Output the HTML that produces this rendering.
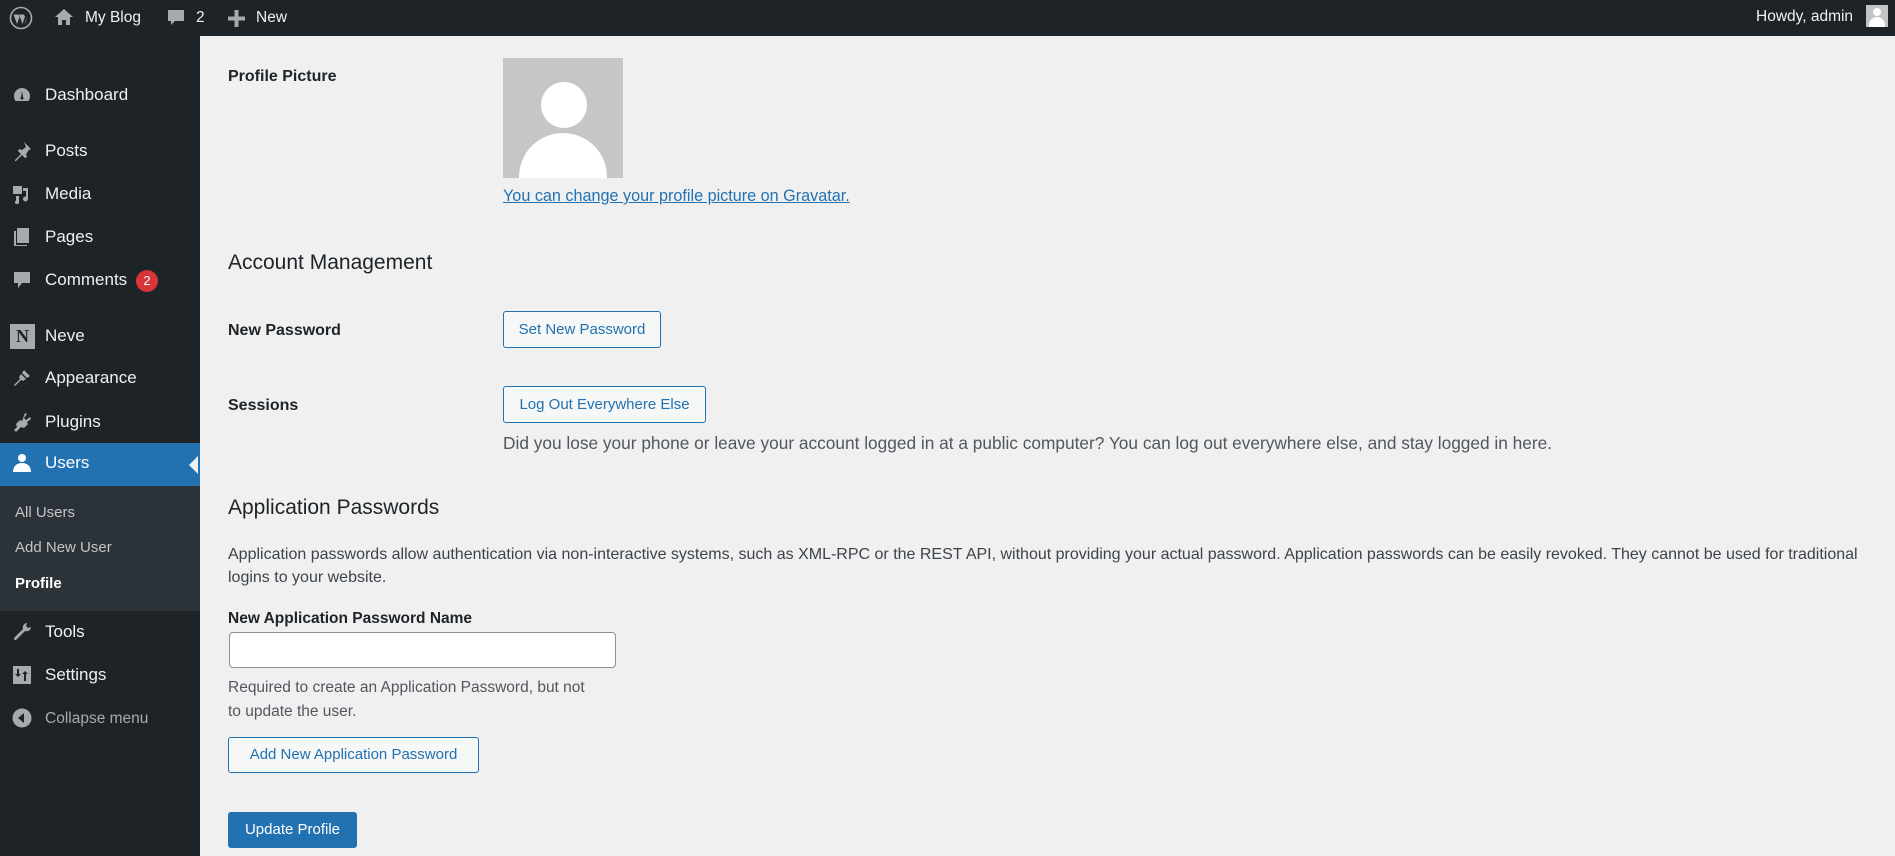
<!DOCTYPE html>
<html><head><meta charset="utf-8"><style>
*{box-sizing:border-box;margin:0;padding:0}
body{width:1895px;height:856px;overflow:hidden;background:#f0f0f1;font-family:"Liberation Sans",sans-serif;color:#1d2327;position:relative}
.a{position:absolute;white-space:nowrap}
#bar{position:absolute;left:0;top:0;width:1895px;height:36px;background:#1d2327;color:#f0f0f1;font-size:15.5px}
#side{position:absolute;left:0;top:36px;width:200px;height:820px;background:#1d2327}
.mi{position:absolute;left:45px;color:#f0f0f1;font-size:17px;line-height:20px}
.ic{position:absolute;left:11px;width:22px;height:20px;fill:#a7aaad}
.sub{position:absolute;left:15px;color:#c3c4c7;font-size:15px}
.lbl{position:absolute;left:228px;font-size:16px;font-weight:bold;color:#1d2327}
.btn{position:absolute;border:1px solid #2271b1;border-radius:3px;background:#f6f7f7;color:#2271b1;font-size:15px;text-align:center}
.p{font-size:16.2px;color:#50575e}
</style></head><body>
<div id="bar">
 <svg class="a" style="left:9px;top:6px" width="24" height="24" viewBox="0 0 24 24"><circle cx="12" cy="12" r="10.5" fill="none" stroke="#a7aaad" stroke-width="1.6"/><path d="M4.5 8.5l3.5 9.5 2.5-7-1-2.5h-1.5zM10 8.5l3.5 9.5 2.5-7.5-1.2-2h-1.3zM16.5 9.5c1.5 2.5 1.5 5-1 8.5l2-6z" fill="#a7aaad"/></svg>
 <svg class="a" style="left:54px;top:8px" width="20" height="18" viewBox="0 0 20 18"><path d="M10 1L1 9h3v8h4v-5h4v5h4V9h3z" fill="#a7aaad"/></svg>
 <div class="a" style="left:85px;top:9px">My Blog</div>
 <svg class="a" style="left:166px;top:8px" width="20" height="20" viewBox="0 0 20 20"><path d="M2 2h16v11H9l-4 4v-4H2z" fill="#a7aaad"/></svg>
 <div class="a" style="left:196px;top:9px">2</div>
 <svg class="a" style="left:228px;top:10px" width="17" height="17" viewBox="0 0 17 17"><path d="M6.5 0h4v6.5H17v4h-6.5V17h-4v-6.5H0v-4h6.5z" fill="#a7aaad"/></svg>
 <div class="a" style="left:256px;top:9px">New</div>
 <div class="a" style="left:1756px;top:8px">Howdy, admin</div>
 <div class="a" style="left:1866px;top:5px;width:22px;height:22px;background:#c3c4c7;overflow:hidden"><div style="position:absolute;left:7px;top:3px;width:8px;height:8px;border-radius:50%;background:#fff"></div><div style="position:absolute;left:3px;top:12px;width:16px;height:14px;border-radius:8px 8px 0 0;background:#fff"></div></div>
</div>
<div id="side">
 <div class="a" style="left:0;top:407px;width:200px;height:43px;background:#2271b1"></div>
 <div class="a" style="left:189px;top:420px;width:0;height:0;border:9px solid transparent;border-right-color:#f0f0f1;border-left:0"></div>
 <div class="a" style="left:0;top:450px;width:200px;height:125px;background:#2c3338"></div>
</div>
<svg class="ic" style="top:85px" viewBox="0 0 20 20"><path d="M10 3a8 8 0 0 0-8 8c0 2 .6 3.5 1.5 5h13c.9-1.5 1.5-3 1.5-5a8 8 0 0 0-8-8zm0 3l1 6a1.5 1.5 0 1 1-2 0z"/></svg><div class="mi" style="top:85px">Dashboard</div>
<svg class="ic" style="top:141px" viewBox="0 0 20 20"><path d="M12 1l7 7-2 1-3 4 1 3-2 1-3-3-6 6-1 0 0-1 6-6-3-3 1-2 3 1 4-3z"/></svg><div class="mi" style="top:141px">Posts</div>
<svg class="ic" style="top:184px" viewBox="0 0 20 20"><path d="M1 2h9v8H1zM11 4h5v11a2.5 2.5 0 1 1-2-2.5V7h-3zM4 12h3v6a2 2 0 1 1-3-1.5z"/></svg><div class="mi" style="top:184px">Media</div>
<svg class="ic" style="top:227px" viewBox="0 0 20 20"><path d="M5 1h12v15H5z M2 4h2v14h11v1H2z"/></svg><div class="mi" style="top:227px">Pages</div>
<svg class="ic" style="top:270px" viewBox="0 0 20 20"><path d="M2 2h16v11H10l-4 5v-5H2z"/></svg><div class="mi" style="top:270px">Comments</div>
<div class="a" style="left:136px;top:270px;width:22px;height:22px;border-radius:11px;background:#d63638;color:#fff;font-size:13px;text-align:center;line-height:22px">2</div>
<div class="a" style="left:10px;top:324px;width:25px;height:25px;background:#a7aaad;color:#1d2327;font:bold 18px 'Liberation Serif',serif;text-align:center;line-height:25px">N</div><div class="mi" style="top:326px">Neve</div>
<svg class="ic" style="top:368px" viewBox="0 0 20 20"><path d="M12 2l6 6-3 2-5-5zM9 6l5 5-3 2-2-1-6 6-1-1 6-6-1-2z"/></svg><div class="mi" style="top:368px">Appearance</div>
<svg class="ic" style="top:412px" viewBox="0 0 20 20"><path d="M13 1l2 1-3 4 2 2 4-3 1 2-4 3 1 2-4 4-3-1-5 5-2-2 3-3-1-3 4-4 2 1z"/></svg><div class="mi" style="top:412px">Plugins</div>
<svg class="ic" style="top:453px;fill:#fff" viewBox="0 0 20 20"><circle cx="10" cy="5" r="4"/><path d="M1 19c0-6 4-9 9-9s9 3 9 9z"/></svg><div class="mi" style="top:453px;color:#fff">Users</div>
<div class="sub" style="top:504px">All Users</div>
<div class="sub" style="top:539px">Add New User</div>
<div class="sub" style="top:575px;color:#fff;font-weight:bold">Profile</div>
<svg class="ic" style="top:622px" viewBox="0 0 20 20"><path d="M15 1a4.5 4.5 0 0 0-4 6l-9 9a1.6 1.6 0 0 0 2 2l9-9a4.5 4.5 0 0 0 6-4l-3 1-2-2 1-3z"/></svg><div class="mi" style="top:622px">Tools</div>
<svg class="ic" style="top:665px" viewBox="0 0 20 20"><path d="M1 1h18v18H1zM5 4v5H3l3 3 3-3H7V4zm7 12h2V9h2l-3-3-3 3h2z"/></svg><div class="mi" style="top:665px">Settings</div>
<svg class="ic" style="top:708px" viewBox="0 0 20 20"><circle cx="10" cy="10" r="9.5"/><path d="M12 5v10l-6-5z" fill="#1d2327"/></svg><div class="mi" style="top:709px;color:#a7aaad;font-size:15.5px">Collapse menu</div>

<div class="lbl" style="top:68px">Profile Picture</div>
<div class="a" style="left:503px;top:58px;width:120px;height:120px;background:#c6c6c6;overflow:hidden"><div style="position:absolute;left:38px;top:24px;width:46px;height:46px;border-radius:50%;background:#fff"></div><div style="position:absolute;left:16px;top:75px;width:88px;height:80px;border-radius:44px 44px 0 0;background:#fff"></div></div>
<div class="a p" style="left:503px;top:187px;color:#2271b1;text-decoration:underline">You can change your profile picture on Gravatar<span style="text-decoration:none;color:#50575e">.</span></div>
<div class="a" style="left:228px;top:251px;font-size:21px">Account Management</div>
<div class="lbl" style="top:322px">New Password</div>
<div class="btn" style="left:503px;top:311px;width:158px;height:37px;line-height:35px">Set New Password</div>
<div class="lbl" style="top:397px">Sessions</div>
<div class="btn" style="left:503px;top:386px;width:203px;height:37px;line-height:35px">Log Out Everywhere Else</div>
<div class="a p" style="left:503px;top:433px;font-size:17.3px">Did you lose your phone or leave your account logged in at a public computer? You can log out everywhere else, and stay logged in here.</div>
<div class="a" style="left:228px;top:496px;font-size:21px">Application Passwords</div>
<div class="a" style="left:228px;top:543px;font-size:16px;line-height:23px;color:#3c434a">Application passwords allow authentication via non-interactive systems, such as XML-RPC or the REST API, without providing your actual password. Application passwords can be easily revoked. They cannot be used for traditional<br>logins to your website.</div>
<div class="lbl" style="top:610px;font-size:15.5px">New Application Password Name</div>
<div class="a" style="left:229px;top:632px;width:387px;height:36px;background:#fff;border:1px solid #8c8f94;border-radius:4px"></div>
<div class="a p" style="left:228px;top:676px;line-height:24px;font-size:15.5px">Required to create an Application Password, but not<br>to update the user.</div>
<div class="btn" style="left:228px;top:737px;width:251px;height:36px;line-height:34px">Add New Application Password</div>
<div class="btn" style="left:228px;top:812px;width:129px;height:36px;line-height:34px;background:#2271b1;color:#fff">Update Profile</div>
</body></html>
